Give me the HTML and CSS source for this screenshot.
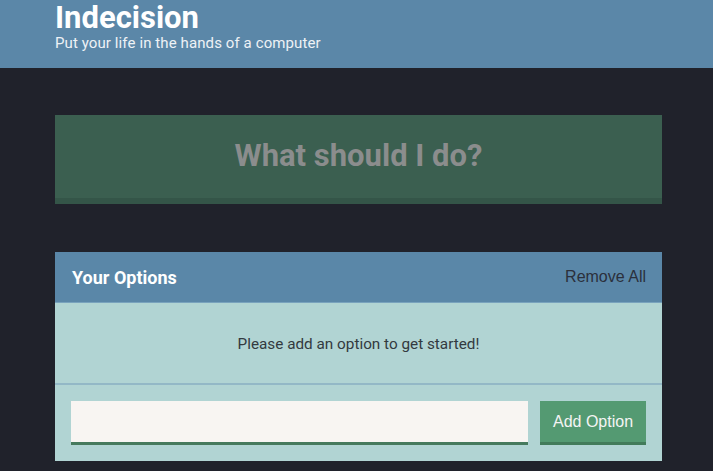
FILE: index.html
```html
<!DOCTYPE html>
<html>
<head>
<meta charset="utf-8">
<title>Indecision</title>
<link rel="stylesheet" href="styles.css">
</head>
<body>
<header class="header">
  <div class="container">
    <h1 class="header__title">Indecision</h1>
    <h2 class="header__subtitle">Put your life in the hands of a computer</h2>
  </div>
</header>
<main class="container">
  <button class="big-button" disabled>What should I do?</button>
  <section class="widget">
    <div class="widget-header">
      <h3 class="widget-header__title">Your Options</h3>
      <button class="button button--link">Remove All</button>
    </div>
    <p class="widget__message">Please add an option to get started!</p>
    <form class="add-option">
      <input class="add-option__input" type="text" name="option">
      <button class="button" type="button">Add Option</button>
    </form>
  </section>
</main>
</body>
</html>
```
FILE: styles.css
```css
* { box-sizing: border-box; }
body {
  margin: 0;
  background: #20222b;
  font-family: Roboto, "Noto Sans", sans-serif;
  color: #fff;
}
.container {
  width: 607px;
  margin-left: 55px;
}
.header {
  background: #5b87a8;
  height: 68px;
  padding-top: 2px;
}
.header__title {
  margin: 0;
  font-size: 31px;
  line-height: 32px;
  font-weight: 700;
  color: #fff;
}
.header__subtitle {
  margin: 0;
  font-size: 15px;
  line-height: 19px;
  font-weight: 400;
  color: #eef2f6;
  letter-spacing: 0.1px;
}
.big-button {
  display: block;
  width: 100%;
  margin-top: 47px;
  height: 89px;
  background: #3b5f50;
  border: none;
  border-bottom: 6px solid #345548;
  font-family: Roboto, "Noto Sans", sans-serif;
  font-size: 31px;
  font-weight: 700;
  letter-spacing: 0;
  color: #8b8d8d;
  padding: 0 0 2px;
}
.widget {
  margin-top: 48px;
  background: #b1d4d3;
}
.widget-header {
  display: flex;
  justify-content: space-between;
  align-items: center;
  background: #5a87a8;
  height: 51px;
  padding: 0 16px 0 17px;
  border-bottom: 1px solid #79a3bd;
}
.widget-header__title {
  margin: 0;
  font-size: 18px;
  font-weight: 700;
  color: #fff;
}
.button {
  background: #549a72;
  border: none;
  border-bottom: 3px solid #427b5a;
  color: #f4f4f4;
  font-family: "Liberation Sans", Arial, sans-serif;
  font-size: 16px;
  padding: 0 12px;
  height: 44px;
  width: 106px;
}
.button--link {
  background: none;
  border: none;
  color: #2b303c;
  width: auto;
  height: auto;
  padding: 0;
}
.widget__message {
  margin: 0;
  height: 82px;
  padding-top: 32px;
  text-align: center;
  font-size: 15.3px;
  line-height: 19px;
  color: #333a40;
  border-bottom: 2px solid #93b8c6;
}
.add-option {
  display: flex;
  gap: 12px;
  padding: 16px;
}
.add-option__input {
  flex: 1;
  height: 44px;
  border: none;
  border-bottom: 3px solid #467a5d;
  background: #f8f5f2;
  padding: 0 12px;
}
```
